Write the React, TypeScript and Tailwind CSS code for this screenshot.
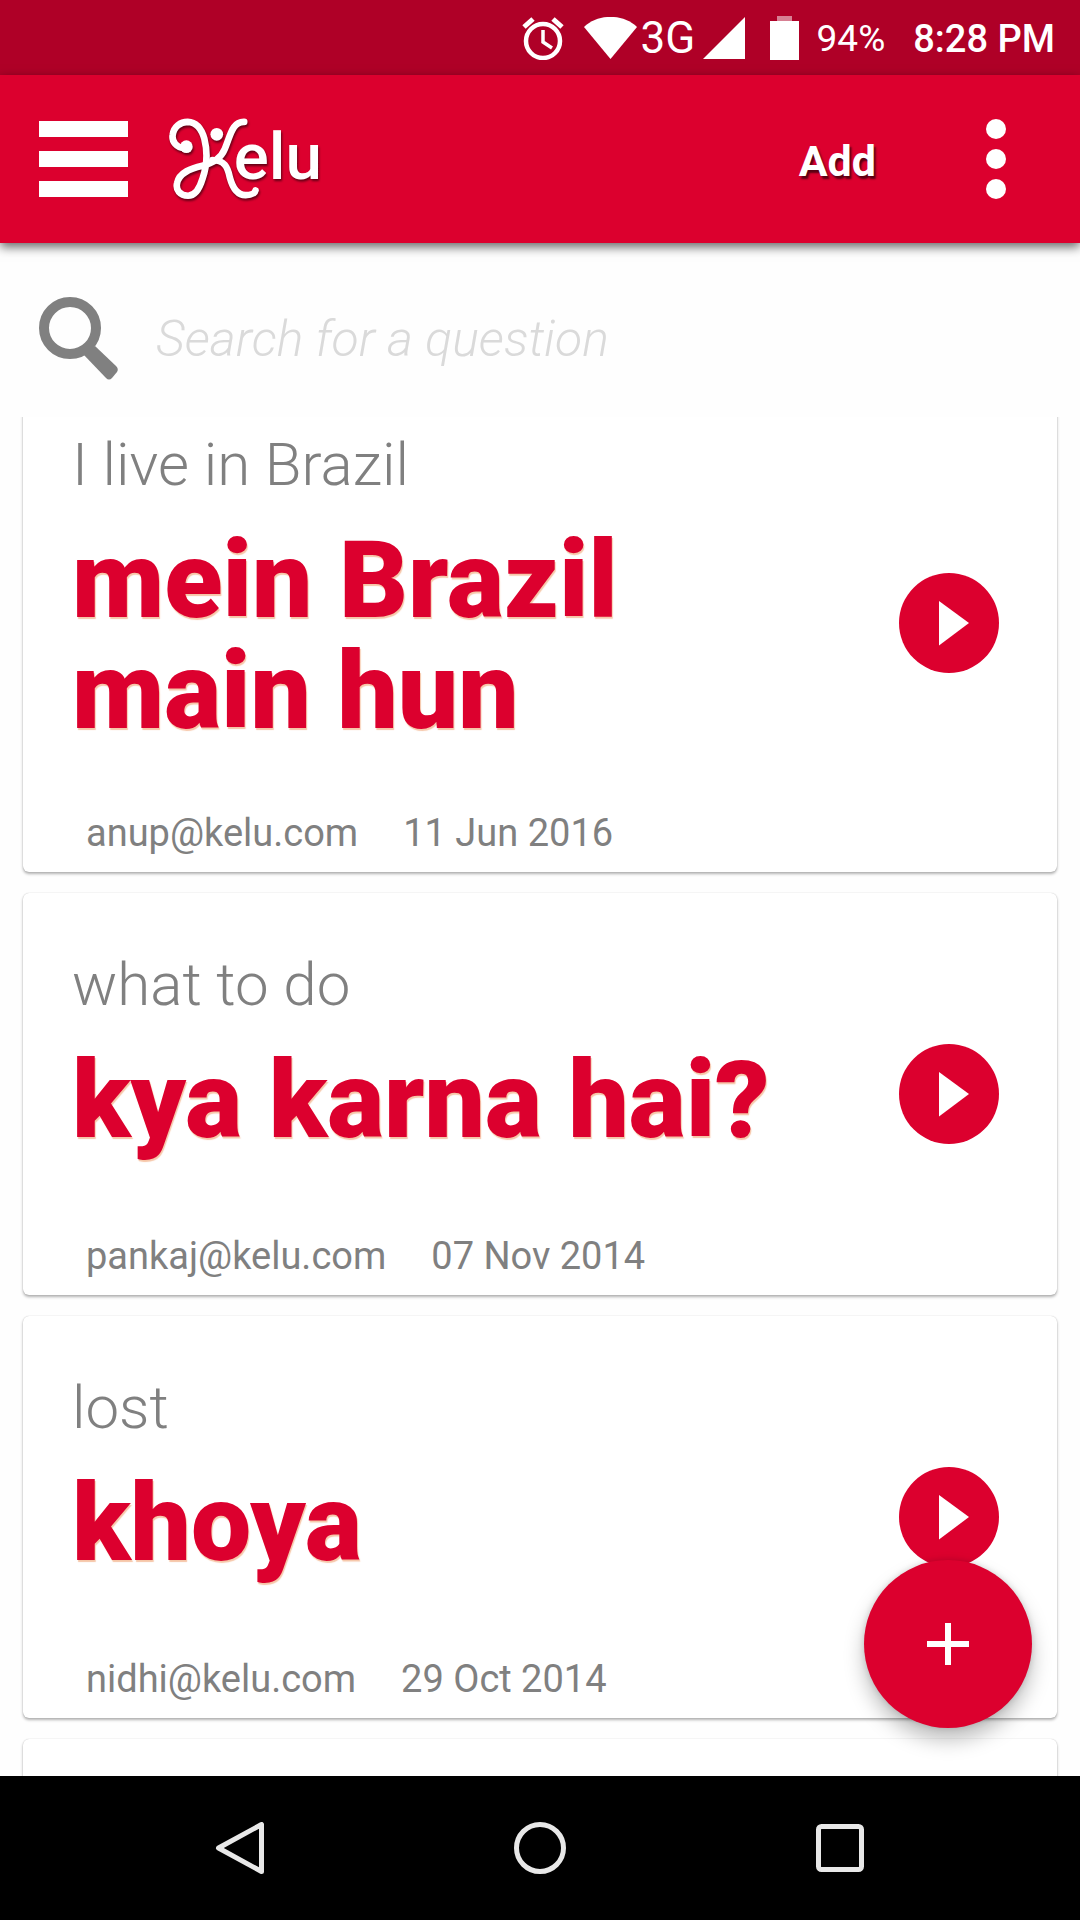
import React from "react";

type Phrase = { question: string; answer: string; author: string; date: string };

const phrases: Phrase[] = [
  { question: "I live in Brazil", answer: "mein Brazil main hun", author: "anup@kelu.com", date: "11 Jun 2016" },
  { question: "what to do", answer: "kya karna hai?", author: "pankaj@kelu.com", date: "07 Nov 2014" },
  { question: "lost", answer: "khoya", author: "nidhi@kelu.com", date: "29 Oct 2014" },
];

function StatusBar() {
  return (
    <div className="flex h-[75px] shrink-0 items-center justify-end bg-[#af0027] pt-px pr-[25px] text-white">
      <svg className="mr-5 h-11 w-[42px]" viewBox="0 0 42 44" fill="none" stroke="currentColor">
        <circle cx="21" cy="25" r="17" strokeWidth="4.5" />
        <path d="M21 14v12l9 6" strokeWidth="3.5" />
        <path d="M2 11l9-8M40 11l-9-8" strokeWidth="5" />
      </svg>
      <svg className="mr-1 h-[42px] w-[53px]" viewBox="0 0 53 42" fill="currentColor">
        <path d="M26.500 42L0 10C14-3.500 39-3.500 53 10z" />
      </svg>
      <span className="mr-2 w-[54px] text-[44px] leading-[44px]">3G</span>
      <svg className="mr-[25px] h-[42px] w-[42px]" viewBox="0 0 42 42" fill="currentColor">
        <path d="M42 0v42H0z" />
      </svg>
      <svg className="mr-[18px] h-11 w-[29px]" viewBox="0 0 29 44" fill="currentColor">
        <path d="M7 0h15v5H7z" opacity="0.5" />
        <path d="M0 5h29v39H0z" />
      </svg>
      <span className="mr-7 pt-0.5 text-[37px] leading-[44px]">94%</span>
      <span className="pt-0.5 text-[38px] leading-[44px] font-medium">8:28 PM</span>
    </div>
  );
}

function Logo() {
  return (
    <svg
      className="h-[84px] w-[157px] drop-shadow-[1px_2px_1px_rgba(0,0,0,0.55)]"
      viewBox="500 140 470 250"
      role="img"
      aria-label="Kelu"
    >
      <g fill="none" stroke="#fff" strokeWidth="20" strokeLinecap="round" strokeLinejoin="round">
        <path d="M553 232C528 232 514 212 517 193C520 168 540 154 562 154C590 155 605 180 612 205C622 245 620 285 606 325C598 352 585 375 563 375C538 375 526 357 530 338C536 304 575 292 606 285C640 277 662 262 673 235C690 195 695 153 731 154" />
        <path d="M636 268C672 268 682 290 688 320C696 350 708 374 736 373C752 373 763 368 765 359" />
      </g>
      <circle cx="558" cy="228" r="19" fill="#fff" />
      <circle cx="649" cy="191" r="19" fill="#fff" />
      <text x="700" y="324" fill="#fff" fontFamily="Roboto, sans-serif" fontSize="196" fontWeight="500">
        elu
      </text>
    </svg>
  );
}

function Toolbar() {
  return (
    <header className="relative z-10 flex h-[168px] shrink-0 items-center bg-[#dc002e] pr-[74px] pl-[39px] text-white shadow-[0_4px_10px_rgba(0,0,0,0.6)]">
      <button aria-label="Open menu" className="flex w-[89px] flex-col gap-[14px]">
        <span className="h-4 bg-white" />
        <span className="h-4 bg-white" />
        <span className="h-4 bg-white" />
      </button>
      <a href="#" className="ml-[39px]">
        <Logo />
      </a>
      <button className="ml-auto pt-1 text-[43px] leading-[52px] font-bold [text-shadow:2px_3px_2px_rgba(0,0,0,0.6)]">
        Add
      </button>
      <button aria-label="More options" className="ml-[110px] flex flex-col gap-[10px]">
        <span className="size-5 rounded-full bg-white" />
        <span className="size-5 rounded-full bg-white" />
        <span className="size-5 rounded-full bg-white" />
      </button>
    </header>
  );
}

function SearchBar() {
  return (
    <label className="flex h-[174px] shrink-0 items-center pt-[18px] pr-10 pl-[39px]">
      <svg className="h-[84px] w-20 shrink-0" viewBox="0 0 80 84">
        <circle cx="31" cy="31" r="26" strokeWidth="10" fill="none" stroke="#808080" />
        <path d="M56 49L77 69Q80 72 78 75L73 81Q70 84 67 81L44 57z" fill="#808080" />
      </svg>
      <input
        type="search"
        aria-label="Search for a question"
        placeholder="Search for a question"
        className="ml-[37px] h-20 min-w-0 flex-1 text-[50px] font-light italic outline-none placeholder:text-[#dadada]"
      />
    </label>
  );
}

const cardStyle = "rounded-[6px] bg-white shadow-[0_2px_3px_rgba(0,0,0,0.3),0_0_1px_rgba(0,0,0,0.25)]";

function PhraseCard({ question, answer, author, date }: Phrase) {
  return (
    <article className={`flex items-center pr-[58px] pl-[49px] ${cardStyle}`}>
      <div className="flex-1 pt-[57px] pb-[18px]">
        <p className="text-[60px] leading-[70px] font-light">{question}</p>
        <h2 className="mt-[25px] min-h-[125px] max-w-[720px] text-[107px] leading-[111px] font-black text-[#dc002e] [text-shadow:1px_2px_1px_rgba(240,160,110,0.6)]">
          {answer}
        </h2>
        <p className="mt-[65px] flex gap-[45px] pl-[14px] text-[38px] leading-[42px]">
          <span>{author}</span>
          <time>{date}</time>
        </p>
      </div>
      <button aria-label={`Play ${answer}`} className="flex size-[100px] shrink-0 items-center justify-center rounded-full bg-[#dc002e]">
        <svg className="size-[100px]" viewBox="0 0 100 100" fill="#fff">
          <path d="M40 28l30 22-30 22.500z" />
        </svg>
      </button>
    </article>
  );
}

function NavigationBar() {
  return (
    <nav className="grid h-36 shrink-0 grid-cols-3 items-center justify-items-center bg-black px-[90px] text-[#e8e8e8]">
      <button aria-label="Back">
        <svg className="size-[52px]" viewBox="0 0 52 52" fill="none" stroke="currentColor" strokeWidth="5" strokeLinejoin="round">
          <path d="M47.500 2.500v47L4.500 26z" />
        </svg>
      </button>
      <button aria-label="Home">
        <svg className="size-[52px]" viewBox="0 0 52 52" fill="none" stroke="currentColor" strokeWidth="5">
          <circle cx="26" cy="26" r="23.500" />
        </svg>
      </button>
      <button aria-label="Recent apps">
        <svg className="size-[52px]" viewBox="0 0 52 52" fill="none" stroke="currentColor" strokeWidth="5">
          <rect x="4.500" y="4.500" width="43" height="43" rx="3" />
        </svg>
      </button>
    </nav>
  );
}

export default function App() {
  return (
    <div className="flex h-screen flex-col bg-[#fefefe] font-['Roboto',sans-serif] text-[#808080]">
      <StatusBar />
      <Toolbar />
      <SearchBar />
      <main className="relative min-h-0 flex-1 overflow-hidden">
        <div className="-mt-11 flex flex-col gap-[21px] px-[23px]">
          {phrases.map((phrase) => (
            <PhraseCard key={phrase.answer} {...phrase} />
          ))}
          <div className={`h-[402px] ${cardStyle}`} />
        </div>
        <button
          aria-label="Add a question"
          className="absolute right-12 bottom-12 flex size-[168px] items-center justify-center rounded-full bg-[#dc002e] shadow-[0_12px_20px_rgba(0,0,0,0.25),0_0_6px_rgba(0,0,0,0.15)]"
        >
          <svg className="size-[42px]" viewBox="0 0 42 42" stroke="#fff" strokeWidth="6">
            <path d="M21 0v42M0 21h42" />
          </svg>
        </button>
      </main>
      <NavigationBar />
    </div>
  );
}
